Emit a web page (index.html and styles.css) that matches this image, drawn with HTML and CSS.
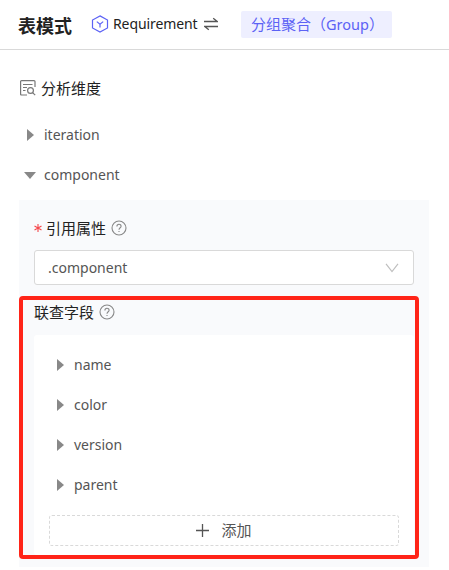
FILE: index.html
```html
<!DOCTYPE html>
<html lang="zh-CN">
<head>
    <meta charset="UTF-8">
    <meta name="viewport" content="width=device-width, initial-scale=1.0">
    <title>表模式</title>
    <link rel="stylesheet" href="styles.css">
</head>
<body>
    <header class="header">
        <h1 class="title">表模式</h1>
        <svg class="entity-icon" width="18" height="18" viewBox="0 0 18 18" fill="none" stroke="#5c62f5" stroke-width="1.2">
            <path d="M9 .9L16.5 5v8L9 17.1 1.5 13V5z"/>
            <path d="M5.800 6.600L9 9.200l3.200-2.600M9 9.200V12.500"/>
        </svg>
        <span class="entity latin">Requirement</span>
        <svg class="swap" width="14" height="14" viewBox="0 0 14 14" fill="none" stroke="#555" stroke-width="1.3">
            <path d="M0 4.500H13.200L9.200 1.300M14 9.500H.8L4.800 12.700"/>
        </svg>
        <span class="tag">分组聚合（<span class="group">Group</span>）</span>
    </header>

    <main class="content">
        <h2 class="section">
            <svg width="16" height="16" viewBox="0 0 16 16" fill="none" stroke="#777" stroke-width="1.2">
                <path d="M7 15H1.600Q.6 15 .6 14V1.600Q.6.6 1.600.6H14Q15 .6 15 1.600V7M3 4.500H12.500M3 7.500H7M3 10.500H5.500"/>
                <circle cx="10.500" cy="10.500" r="2.900"/>
                <path d="M12.600 12.600L15.200 15.200"/>
            </svg>
            <span class="text">分析维度</span>
        </h2>

        <div class="row latin"><i class="arrow"></i><span class="text">iteration</span></div>
        <div class="row latin"><i class="arrow open"></i><span class="text">component</span></div>

        <div class="panel">
            <div class="label">
                <svg class="required" width="8" height="8" viewBox="0 0 8 8" stroke="#f5484c" stroke-width="1.100">
                    <path d="M4 0V8M.5 2L7.500 6M7.500 2L.5 6"/>
                </svg>
                <span class="text">引用属性</span>
                <svg class="help" width="16" height="16" viewBox="0 0 16 16" fill="none" stroke="#888" stroke-width="1.100">
                    <circle cx="8" cy="8" r="7"/>
                    <path d="M5.900 6.500C5.900 3.600 10.100 3.600 10.100 6.300 10.100 7.800 8 7.800 8 9.800M8 10.900V12.100"/>
                </svg>
            </div>
            <div class="select latin">
                .component
                <svg width="14" height="10" viewBox="0 0 14 10" fill="none" stroke="#bfbfbf" stroke-width="1.200">
                    <path d="M1 .8L7 8.600 13 .8"/>
                </svg>
            </div>

            <div class="label fields-label">
                <span class="text">联查字段</span>
                <svg class="help" width="16" height="16" viewBox="0 0 16 16" fill="none" stroke="#888" stroke-width="1.100">
                    <circle cx="8" cy="8" r="7"/>
                    <path d="M5.900 6.500C5.900 3.600 10.100 3.600 10.100 6.300 10.100 7.800 8 7.800 8 9.800M8 10.900V12.100"/>
                </svg>
            </div>
            <div class="fields">
                <div class="row latin"><i class="arrow"></i><span class="text">name</span></div>
                <div class="row latin"><i class="arrow"></i><span class="text">color</span></div>
                <div class="row latin"><i class="arrow"></i><span class="text">version</span></div>
                <div class="row latin"><i class="arrow"></i><span class="text">parent</span></div>
                <button class="add">
                    <svg width="13" height="13" viewBox="0 0 13 13" stroke="#555" stroke-width="1.300">
                        <path d="M6.500 0V13M0 6.500H13"/>
                    </svg>
                    <span class="text">添加</span>
                </button>
            </div>
            <div class="highlight"></div>
        </div>
    </main>
</body>
</html>
```
FILE: styles.css
```css
* {
    box-sizing: border-box;
}
body {
    margin: 0;
    height: 570px;
    overflow: hidden;
    background: #fff;
    color: #222;
    font-family: "Noto Sans CJK SC", sans-serif;
    font-size: 15px;
}
svg {
    flex: none;
}
.text {
    padding-bottom: 2px;
}
.latin {
    font-family: "Noto Sans", "Noto Sans CJK SC", sans-serif;
    font-size: 14px;
}
.header {
    display: flex;
    align-items: center;
    height: 50px;
    padding-left: 18px;
    border-bottom: 1px solid #d9d9d9;
}
.title {
    width: 73px;
    margin: 0;
    font-size: 18px;
    line-height: 26px;
}
.entity {
    width: 85px;
    margin: 0 6px 2px 4px;
    letter-spacing: -0.1px;
}
.entity-icon,
.swap {
    margin-bottom: 1px;
}
.tag {
    width: 151px;
    height: 27px;
    margin-left: 23px;
    padding-left: 10px;
    border-radius: 2px;
    background: #eeefff;
    color: #5c62f5;
    line-height: 25px;
    white-space: nowrap;
}
.group {
    font-family: "Noto Sans", sans-serif;
    font-size: 14.5px;
}
.content {
    padding: 24px 20px 0 19px;
}
.section {
    display: flex;
    align-items: center;
    gap: 5px;
    height: 28px;
    margin: 0 0 13px 1px;
    font-size: 15px;
    font-weight: 400;
}
.row {
    display: flex;
    align-items: center;
    height: 40px;
    padding-left: 8px;
    color: #555;
}
.arrow {
    width: 0;
    height: 0;
    margin-right: 10px;
    border-top: 6px solid transparent;
    border-bottom: 6px solid transparent;
    border-left: 7px solid #888;
}
.arrow.open {
    margin: 0 8px 0 -3px;
    border-top: 7px solid #888;
    border-right: 6px solid transparent;
    border-bottom: 0;
    border-left: 6px solid transparent;
}
.panel {
    position: relative;
    height: 367px;
    margin-top: 5px;
    padding: 16px 15px 12px;
    background: #f9fafc;
}
.label {
    display: flex;
    align-items: center;
    height: 24px;
}
.required {
    margin-right: 4px;
}
.help {
    margin-left: 5px;
}
.select {
    display: flex;
    align-items: center;
    justify-content: space-between;
    height: 35px;
    margin-top: 10px;
    padding: 0 14px 0 13px;
    border: 1px solid #d9d9d9;
    border-radius: 3px;
    background: #fff;
    color: #555;
}
.fields-label {
    margin: 15px 0 11px;
}
.fields {
    height: 220px;
    padding: 10px 15px;
    background: #fff;
    border-radius: 3px;
}
.add {
    display: flex;
    align-items: center;
    justify-content: center;
    gap: 12px;
    width: 100%;
    height: 31px;
    margin-top: 10px;
    padding: 0;
    border: 1px dashed #d9d9d9;
    border-radius: 3px;
    background: #fff;
    color: #555;
    font: inherit;
}
/* red frame drawn over the joined fields */
.highlight {
    position: absolute;
    top: 96px;
    left: 0;
    width: 400px;
    height: 263px;
    border: 4px solid #ff2418;
    border-radius: 4px;
}
```
